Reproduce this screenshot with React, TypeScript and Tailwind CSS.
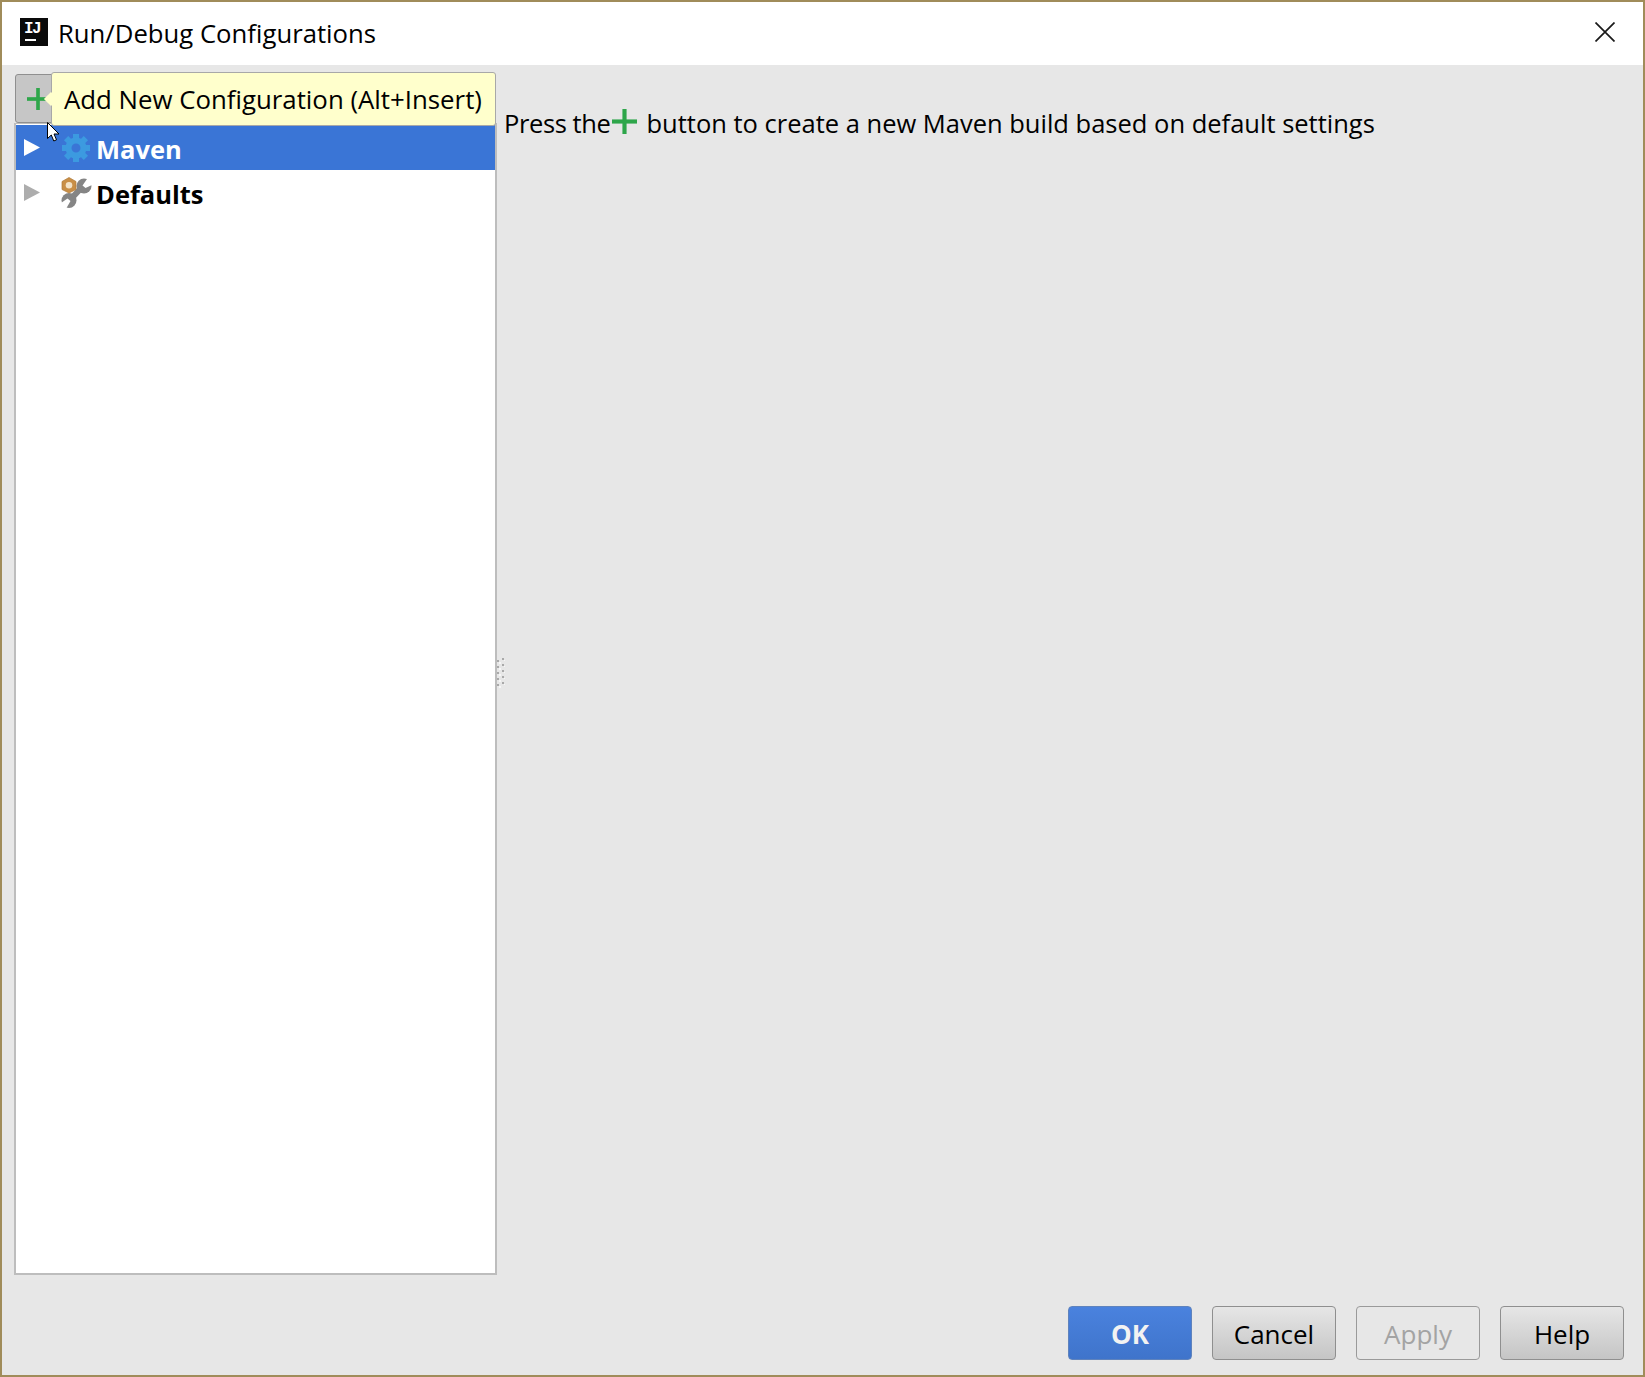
const font = "font-['Open_Sans','Noto_Sans',sans-serif]";

function IdeaLogo() {
  return (
    <div className="relative w-[28px] h-[28px] bg-[#0a0a0a] shrink-0">
      <span className="absolute left-[4px] top-[3px] text-[16px] leading-[16px] font-bold text-white font-['Liberation_Mono',monospace] tracking-[-1.500px]">
        IJ
      </span>
      <div className="absolute left-[5px] top-[21px] w-[11px] h-[2px] bg-white" />
    </div>
  );
}

function Plus({ className }: { className: string }) {
  return (
    <svg className={className} viewBox="0 0 24 24" fill="none">
      <path d="M12 0V24" stroke="#2ea64a" strokeWidth="4" />
      <path d="M0 12H24" stroke="#2ea64a" strokeWidth="4" />
    </svg>
  );
}

function Arrow({ color }: { color: string }) {
  return (
    <svg className="w-[16px] h-[17px] shrink-0" viewBox="0 0 16 17">
      <path d="M0 0L16 8.500L0 17Z" fill={color} />
    </svg>
  );
}

function CloseIcon() {
  return (
    <svg className="ml-auto w-[20px] h-[20px]" viewBox="0 0 20 20" fill="none">
      <path d="M0.500 0.500L19.500 19.500M19.500 0.500L0.500 19.500" stroke="#1a1a1a" strokeWidth="1.700" />
    </svg>
  );
}

function GearIcon() {
  const teeth = [0, 45, 90, 135, 180, 225, 270, 315];
  return (
    <svg className="w-[28px] h-[28px] shrink-0" viewBox="0 0 28 28">
      {teeth.map((a) => (
        <rect key={a} x="11" y="0" width="6" height="7" fill="#3c9ae0" transform={`rotate(${a} 14 14)`} />
      ))}
      <circle cx="14" cy="14" r="7.500" fill="none" stroke="#3c9ae0" strokeWidth="6" />
    </svg>
  );
}

function DefaultsIcon() {
  return (
    <svg className="w-[31px] h-[31px] shrink-0" viewBox="0 0 31 31">
      {/* double open-end wrench */}
      <path d="M22 9L9 23" stroke="#858585" strokeWidth="6" />
      <circle cx="23" cy="9" r="7.500" fill="#858585" />
      <circle cx="8" cy="23.500" r="7.500" fill="#858585" />
      <path d="M21.500 8.500L27 0.500H33V7L24.500 11Z" fill="#ffffff" />
      <path d="M9.500 24L5.500 31H0V26L6.500 21.500Z" fill="#ffffff" />
      {/* nut */}
      <path d="M8 0.500L15 4.500V12.500L8 16L1 12.500V4.500Z" fill="#c98f47" stroke="#b07a38" strokeWidth="0.700" />
      <circle cx="8" cy="8.300" r="3.300" fill="#f3e3c8" />
    </svg>
  );
}

function SplitterGrip() {
  const rows = [0, 6, 12, 18, 24];
  return (
    <svg className="absolute left-0 top-[584px] w-[8px] h-[30px]" viewBox="0 0 8 30">
      {rows.map((y) => (
        <g key={y}>
          <rect x="5" y={y} width="2" height="2" fill="#a9a9a9" />
          <rect x="7" y={y + 2} width="1" height="1" fill="#f6f6f6" />
          <rect x="0" y={y + 2} width="2" height="2" fill="#a9a9a9" />
          <rect x="2" y={y + 4} width="2" height="2" fill="#f6f6f6" />
        </g>
      ))}
    </svg>
  );
}

function Cursor() {
  return (
    <svg className="absolute left-[45px] top-[120px] w-[13px] h-[20px]" viewBox="0 0 13 20">
      <path d="M0.500 0.500V16.500L4.300 13L6.800 19L9.500 17.800L7 12H12Z" fill="#fff" stroke="#000" strokeWidth="1" />
    </svg>
  );
}

function DialogButton({ label, kind }: { label: string; kind?: "primary" | "disabled" }) {
  if (kind === "primary") {
    return (
      <div className="w-[124px] h-[54px] pt-[3px] rounded-[4px] border border-[#5f83bd] bg-gradient-to-b from-[#4a82de] to-[#3f74cb] flex items-center justify-center text-[26px] font-bold text-[#f2f2f2]">
        {label}
      </div>
    );
  }
  if (kind === "disabled") {
    return (
      <div className="w-[124px] h-[54px] pt-[3px] rounded-[4px] border border-[#9a9a9a] bg-[#e7e7e7] flex items-center justify-center text-[26px] text-[#a3a3a3]">
        {label}
      </div>
    );
  }
  return (
    <div className="w-[124px] h-[54px] pt-[3px] rounded-[4px] border border-[#8f8f8f] bg-gradient-to-b from-[#e6e6e6] to-[#c5c5c5] flex items-center justify-center text-[26px] text-black">
      {label}
    </div>
  );
}

export default function App() {
  return (
    <div className={`relative w-[1645px] h-[1377px] border-2 border-[#a08c5a] bg-[#e7e7e7] flex flex-col overflow-hidden ${font}`}>
      {/* Title bar */}
      <div className="h-[63px] bg-white flex items-center pl-[18px] pr-[28px] pb-[3px] shrink-0">
        <IdeaLogo />
        <span className="ml-[10px] mt-[5px] text-[25.700px] text-black">Run/Debug Configurations</span>
        <CloseIcon />
      </div>

      <div className="flex-1 flex min-h-0 pl-[12px] pt-[9px]">
        {/* Left side */}
        <div className="w-[483px] h-[1201px] shrink-0 flex flex-col">
          <div className="h-[49px] shrink-0 pl-[1px]">
            <div className="w-[40px] h-[49px] rounded-[3px] border border-[#8f8f8f] bg-[#c6c6c6] flex items-center pl-[11px]">
              <Plus className="w-[22px] h-[24px]" />
            </div>
          </div>
          <div className="flex-1 border-2 border-t border-[#bdbdbd] bg-white">
            <div className="h-[45px] mt-[1px] bg-[#3a75d6] flex items-center pl-[8px]">
              <Arrow color="#ffffff" />
              <div className="ml-[22px]">
                <GearIcon />
              </div>
              <span className="ml-[6px] pt-[3px] text-[25.500px] font-bold text-white">Maven</span>
            </div>
            <div className="h-[45px] flex items-center pl-[8px]">
              <Arrow color="#adadad" />
              <div className="ml-[21px]">
                <DefaultsIcon />
              </div>
              <span className="ml-[4px] pt-[3px] text-[25.500px] font-bold text-black">Defaults</span>
            </div>
          </div>
        </div>

        {/* Right side */}
        <div className="flex-1 flex flex-col">
          <div className="relative h-[1px]">
            <SplitterGrip />
          </div>
          <div className="pl-[7px] mt-[28px] flex items-center h-[40px] text-[25.500px] text-black">
            <span className="tracking-[-0.400px]">Press the</span>
            <Plus className="w-[25px] h-[25px] mx-[2px] mb-[3px]" />
            <span className="ml-[7px]">button to create a new Maven build based on default settings</span>
          </div>
        </div>
      </div>

      {/* Footer buttons */}
      <div className="h-[69px] shrink-0 flex justify-end gap-[20px] pr-[19px]">
        <DialogButton label="OK" kind="primary" />
        <DialogButton label="Cancel" />
        <DialogButton label="Apply" kind="disabled" />
        <DialogButton label="Help" />
      </div>

      {/* Tooltip over the toolbar */}
      <div className="absolute left-[49px] top-[70px] w-[445px] h-[54px] rounded-[3px] border border-[#a8a8a8] bg-[#ffffcc] flex items-center pl-[12px] text-[25.800px] text-black whitespace-nowrap">
        <div className="absolute left-[-6px] top-[21px] w-[10px] h-[10px] rotate-45 bg-[#ffffcc]" />
        Add New Configuration (Alt+Insert)
      </div>
      <Cursor />
    </div>
  );
}
